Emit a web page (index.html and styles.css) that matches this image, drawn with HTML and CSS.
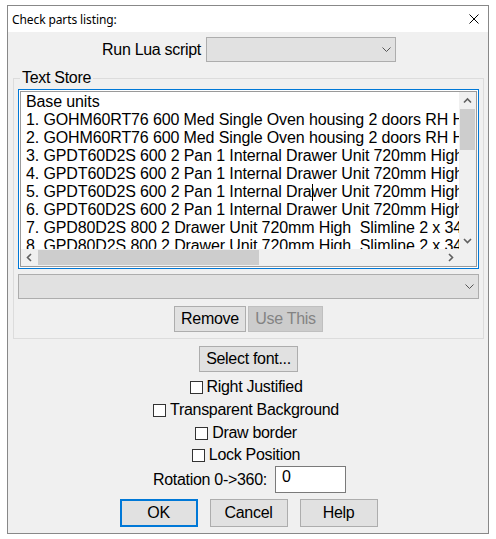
FILE: index.html
```html
<!DOCTYPE html>
<html>
<head>
<meta charset="utf-8">
<link rel="stylesheet" href="styles.css">
</head>
<body>
<div class="window">
  <div class="titlebar">
    <span class="title">Check parts listing:</span>
    <svg class="close" width="10" height="10" viewBox="0 0 10 10"><path d="M0.5 0.5 L9.5 9.5 M9.5 0.5 L0.5 9.5" stroke="#000" stroke-width="1" fill="none"/></svg>
  </div>
  <div class="client">
    <div class="lua-row">
      <span class="lua-label">Run Lua script</span>
      <div class="combo lua-combo"><svg class="chev" width="9" height="5" viewBox="0 0 9 5"><polyline points="0.5,0.5 4.5,4.5 8.5,0.5" fill="none" stroke="#555" stroke-width="1"/></svg></div>
    </div>
    <fieldset class="group">
      <legend>Text Store</legend>
      <div class="edit">
        <div class="edit-inner">
          <div class="edit-main">
            <div class="edit-text">Base units
1. GOHM60RT76 600 Med Single Oven housing 2 doors RH Hinged
2. GOHM60RT76 600 Med Single Oven housing 2 doors RH Hinged
3. GPDT60D2S 600 2 Pan 1 Internal Drawer Unit 720mm High
4. GPDT60D2S 600 2 Pan 1 Internal Drawer Unit 720mm High
5. GPDT60D2S 600 2 Pan 1 Internal Dra<span class="caret"></span>wer Unit 720mm High
6. GPDT60D2S 600 2 Pan 1 Internal Drawer Unit 720mm High
7. GPD80D2S 800 2 Drawer Unit 720mm High  Slimline 2 x 340mm
8. GPD80D2S 800 2 Drawer Unit 720mm High  Slimline 2 x 340mm</div>
            <div class="vscroll">
              <svg class="sb-btn" width="17" height="17" viewBox="0 0 17 17"><polyline points="5,10.5 8.5,7 12,10.5" fill="none" stroke="#606060" stroke-width="1.6"/></svg>
              <div class="vtrack"><div class="vthumb"></div></div>
              <svg class="sb-btn" width="17" height="17" viewBox="0 0 17 17"><polyline points="5,7 8.5,10.5 12,7" fill="none" stroke="#606060" stroke-width="1.6"/></svg>
            </div>
          </div>
          <div class="hscroll-row">
            <div class="hscroll">
              <svg class="sb-btn" width="17" height="17" viewBox="0 0 17 17"><polyline points="10,5 6.5,8.5 10,12" fill="none" stroke="#606060" stroke-width="1.6"/></svg>
              <div class="htrack"><div class="hthumb"></div></div>
              <svg class="sb-btn" width="17" height="17" viewBox="0 0 17 17"><polyline points="7,5 10.5,8.5 7,12" fill="none" stroke="#606060" stroke-width="1.6"/></svg>
            </div>
            <div class="corner"></div>
          </div>
        </div>
      </div>
      <div class="combo wide-combo"><svg class="chev" width="9" height="5" viewBox="0 0 9 5"><polyline points="0.5,0.5 4.5,4.5 8.5,0.5" fill="none" stroke="#555" stroke-width="1"/></svg></div>
      <div class="btn-row">
        <button class="btn btn-remove">Remove</button>
        <button class="btn btn-use" disabled>Use This</button>
      </div>
    </fieldset>
    <button class="btn btn-font">Select font...</button>
    <div class="check check-rj"><span class="box"></span><span>Right Justified</span></div>
    <div class="check check-tb"><span class="box"></span><span>Transparent Background</span></div>
    <div class="check check-db"><span class="box"></span><span>Draw border</span></div>
    <div class="check check-lp"><span class="box"></span><span>Lock Position</span></div>
    <div class="rot">
      <span>Rotation 0-&gt;360:</span>
      <div class="rot-input">0</div>
    </div>
    <div class="dlg-buttons">
      <button class="btn btn-dlg btn-ok">OK</button>
      <button class="btn btn-dlg">Cancel</button>
      <button class="btn btn-dlg">Help</button>
    </div>
  </div>
</div>
</body>
</html>
```
FILE: styles.css
```css
* { box-sizing: border-box; }
html, body { margin: 0; padding: 0; background: #fff; }
body {
  width: 496px;
  height: 539px;
  overflow: hidden;
  font-family: "Liberation Sans", Arial, sans-serif;
  font-size: 16px;
  color: #000;
}
.window {
  margin: 5px 0 0 7px;
  width: 482px;
  height: 529px;
  border: 1px solid #888;
  background: #f0f0f0;
  display: flex;
  flex-direction: column;
}
.titlebar {
  height: 26px;
  flex: none;
  background: #fff;
  display: flex;
  align-items: center;
  justify-content: space-between;
  padding: 0 9px 0 4px;
}
.title {
  font-family: "Noto Sans", "Open Sans", sans-serif;
  font-size: 12px;
  letter-spacing: -0.1px;
}
.close { display: block; }
.client {
  padding: 5px 4px 0 5px;
  display: flex;
  flex-direction: column;
  line-height: 18px;
  letter-spacing: -0.3px;
}
.lua-row {
  display: flex;
  align-items: center;
  gap: 5px;
  height: 25px;
}
.lua-label { width: 188px; text-align: right; }
.combo {
  height: 25px;
  background: #e1e1e1;
  border: 1px solid #adadad;
  display: flex;
  align-items: center;
  justify-content: flex-end;
  padding-right: 4px;
}
.chev { display: block; }
.lua-combo { width: 190px; }
.group {
  margin: 7px 0 0;
  padding: 2px 4px 6px;
  border: 1px solid #dcdcdc;
  min-width: 0;
}
.group legend {
  padding: 0 2px;
  margin-left: 2px;
  line-height: 18px;
}
.edit {
  height: 180px;
  border: 1px solid #0078d7;
  padding: 1px;
  background: #fff;
}
.edit-inner {
  height: 100%;
  border: 1px solid #9a9a9a;
  display: flex;
  flex-direction: column;
}
.edit-main { display: flex; flex: 1; min-height: 0; }
.edit-text {
  flex: 1;
  min-width: 0;
  overflow: hidden;
  padding: 1px 0 0 5px;
  white-space: pre;
  letter-spacing: -0.12px;
  background: #fff;
}
.caret {
  display: inline-block;
  width: 1px;
  height: 17px;
  margin-right: -1px;
  background: #000;
  vertical-align: top;
  margin-top: 1px;
}
.vscroll {
  width: 17px;
  flex: none;
  background: #f0f0f0;
  display: flex;
  flex-direction: column;
}
.sb-btn { display: block; flex: none; }
.vtrack { flex: 1; }
.vthumb { height: 41px; margin: 0 1px; background: #cdcdcd; }
.hscroll-row { display: flex; height: 17px; flex: none; }
.hscroll { flex: 1; display: flex; background: #f0f0f0; }
.htrack { flex: 1; }
.hthumb { width: 221px; height: 15px; margin-top: 1px; background: #cdcdcd; }
.corner { width: 17px; background: #f0f0f0; }
.wide-combo { margin-top: 5px; }
.btn-row {
  display: flex;
  justify-content: center;
  gap: 2px;
  margin-top: 7px;
}
.btn {
  font: inherit;
  letter-spacing: inherit;
  line-height: 18px;
  color: #000;
  background: #e1e1e1;
  border: 1px solid #adadad;
  padding: 0;
  height: 26px;
  margin: 0;
}
.btn-remove { width: 72px; }
.btn-use { width: 75px; background: #cccccc; border-color: #bfbfbf; color: #838383; }
.btn-font { width: 99px; align-self: center; margin-top: 7px; }
.check {
  display: flex;
  justify-content: center;
  align-items: center;
  gap: 4px;
  height: 18px;
  padding-right: 5px;
}
.box {
  width: 13px;
  height: 13px;
  border: 1px solid #333;
  background: #fff;
}
.check-rj { margin-top: 6px; }
.check-tb { margin-top: 5px; }
.check-db { margin-top: 5px; }
.check-lp { margin-top: 4px; }
.rot {
  display: flex;
  justify-content: center;
  align-items: center;
  gap: 8px;
  margin-top: 2px;
  padding-left: 2px;
}
.rot-input {
  width: 71px;
  height: 27px;
  border: 1px solid #7a7a7a;
  background: #fff;
  padding: 1px 6px;
}
.dlg-buttons {
  display: flex;
  justify-content: center;
  gap: 12px;
  margin-top: 6px;
}
.btn-dlg { width: 78px; height: 28px; }
.btn-ok { border: 2px solid #0078d7; }
```
